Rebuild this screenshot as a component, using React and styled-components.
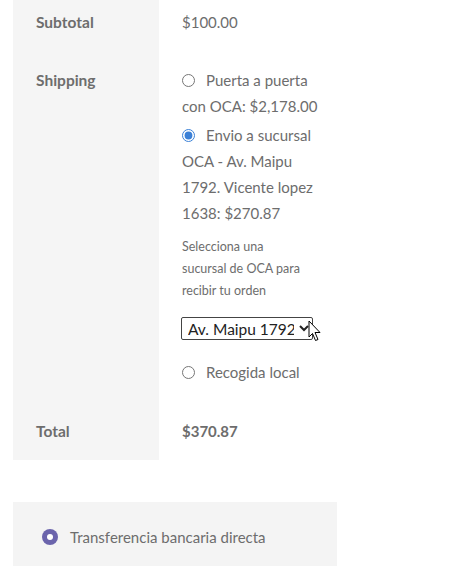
import React from "react";
import styled, { createGlobalStyle } from "styled-components";

const Global = createGlobalStyle`
  html, body { margin: 0; padding: 0; background: #fff; }
  body { font-family: Lato, "Open Sans", sans-serif; color: #6d6d6d; overflow: hidden; }
`;

const Page = styled.div`
  width: 454px;
  height: 566px;
  overflow: hidden;
`;

const Table = styled.div`
  margin: -7px 0 0 13px;
  width: 324px;
  display: grid;
  grid-template-columns: 146px 178px;
`;

const Label = styled.div`
  background: #f5f5f5;
  padding: 16px 23px;
  font-weight: 700;
  font-size: 15.5px;
  line-height: 26px;
  color: #6d6d6d;
`;

const Value = styled.div`
  padding: 16px 22px 16px 23px;
  font-size: 15px;
  line-height: 26px;
  color: #6d6d6d;
  font-weight: ${(p) => (p.$bold ? 700 : 400)};
`;

const List = styled.ul`
  list-style: none;
  margin: 0 0 1px;
  padding: 0;
  display: flex;
  flex-direction: column;
  gap: 3px;
`;

const Item = styled.li`
  margin: 0;
`;

const Line = styled.span`
  display: block;
  white-space: nowrap;
`;

const Radio = styled.input`
  width: 13px;
  height: 13px;
  margin: 0 11px 0 0;
  vertical-align: -1px;
  accent-color: #3b80d6;
`;

const Note = styled.p`
  margin: 10px 0 0;
  font-size: 12.5px;
  line-height: 22px;
  color: #6d6d6d;
`;

const SelectWrap = styled.div`
  position: relative;
  margin: 15px 0 16px -1px;
  width: 132px;
`;

const Select = styled.select`
  display: block;
  width: 132px;
  height: 23px;
  font-family: Lato, sans-serif;
  font-size: 15.5px;
  color: #222;
  border: 1px solid #444;
  border-radius: 2px;
  background: #fff;
  padding: 0 2px;
`;

const Cursor = styled.svg`
  position: absolute;
  left: 127px;
  top: 3px;
  pointer-events: none;
`;

const Payment = styled.div`
  margin: 42px 0 0 13px;
  width: 324px;
  height: 80px;
  box-sizing: border-box;
  background: #f4f4f4;
  padding: 22px 29px;
  display: flex;
  align-items: flex-start;
  gap: 12px;
  font-size: 15px;
  line-height: 26px;
`;

const Dot = styled.span`
  width: 16px;
  height: 16px;
  border-radius: 50%;
  background: #6b64ac;
  display: flex;
  align-items: center;
  justify-content: center;
  margin-top: 5px;
  flex: none;
  &::after {
    content: "";
    width: 6px;
    height: 6px;
    border-radius: 50%;
    background: #fff;
  }
`;

export default function App() {
  return (
    <Page>
      <Global />
      <Table>
        <Label>Subtotal</Label>
        <Value>$100.00</Value>
        <Label>Shipping</Label>
        <Value>
          <List>
            <Item>
              <Line>
                <Radio type="radio" name="ship" readOnly />
                Puerta a puerta
              </Line>
              <Line>con OCA: $2,178.00</Line>
            </Item>
            <Item>
              <Line>
                <Radio type="radio" name="ship" defaultChecked />
                Envio a sucursal
              </Line>
              <Line>OCA - Av. Maipu</Line>
              <Line>1792. Vicente lopez</Line>
              <Line>1638: $270.87</Line>
              <Note>
                <Line>Selecciona una</Line>
                <Line>sucursal de OCA para</Line>
                <Line>recibir tu orden</Line>
              </Note>
              <SelectWrap>
                <Select defaultValue="a">
                  <option value="a">Av. Maipu 1792. Vicente lopez</option>
                </Select>
                <Cursor width="14" height="22" viewBox="0 0 14 22">
                  <path
                    d="M1 1 L1 17 L4.5 13.5 L7.5 20.5 L10 19.5 L7 12.5 L12 12.5 Z"
                    fill="#fff"
                    stroke="#000"
                    strokeWidth="1"
                    strokeLinejoin="round"
                  />
                </Cursor>
              </SelectWrap>
            </Item>
            <Item>
              <Line>
                <Radio type="radio" name="ship" />
                Recogida local
              </Line>
            </Item>
          </List>
        </Value>
        <Label>Total</Label>
        <Value $bold>$370.87</Value>
      </Table>
      <Payment>
        <Dot />
        Transferencia bancaria directa
      </Payment>
    </Page>
  );
}
